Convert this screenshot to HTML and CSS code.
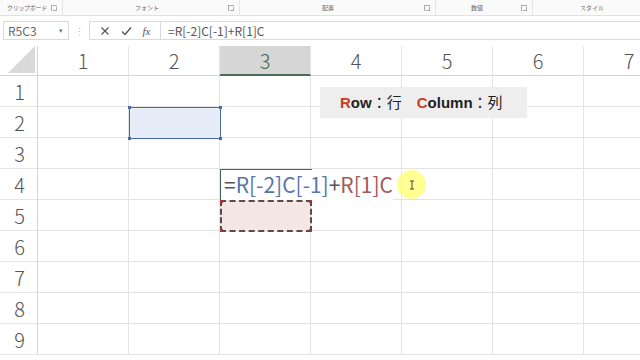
FILE: index.html
```html
<!DOCTYPE html>
<html lang="ja">
<head>
	<meta charset="UTF-8">
	<title>R1C1 参照形式</title>
	<link rel="stylesheet" href="styles.css">
</head>
<body>
	<div class="ribbon">
		<div class="group g-clip"><span>クリップボード</span><i class="launcher"></i></div>
		<div class="group g-font"><span>フォント</span><i class="launcher"></i></div>
		<div class="group g-align"><span>配置</span><i class="launcher"></i></div>
		<div class="group g-num"><span>数値</span><i class="launcher"></i></div>
		<div class="group g-style"><span>スタイル</span></div>
	</div>

	<div class="fbar">
		<div class="namebox">R5C3<span class="drop">▾</span></div>
		<div class="grip">⋮</div>
		<div class="fbtns">
			<svg width="10" height="10" viewBox="0 0 10 10"><path d="M1.5 1.5l7 7M8.5 1.5l-7 7" stroke="#555" stroke-width="1.2" fill="none"/></svg>
			<svg width="11" height="10" viewBox="0 0 11 10"><path d="M1 5.5l3 3 6-7" stroke="#555" stroke-width="1.4" fill="none"/></svg>
			<span class="fx">fx</span>
		</div>
		<div class="finput">=R[-2]C[-1]+R[1]C</div>
	</div>

	<div class="sheet">
		<div class="corner"><svg width="28" height="27" viewBox="0 0 28 27"><polygon points="27,0 27,27 0,27" fill="#d9d9d9"/></svg></div>
		<div class="ch">1</div><div class="ch">2</div><div class="ch sel">3</div><div class="ch">4</div><div class="ch">5</div><div class="ch">6</div><div class="ch">7</div>

		<div class="rh">1</div><div class="c"></div><div class="c"></div><div class="c"></div><div class="c"></div><div class="c"></div><div class="c"></div><div class="c"></div>
		<div class="rh">2</div><div class="c"></div><div class="c"></div><div class="c"></div><div class="c"></div><div class="c"></div><div class="c"></div><div class="c"></div>
		<div class="rh">3</div><div class="c"></div><div class="c"></div><div class="c"></div><div class="c"></div><div class="c"></div><div class="c"></div><div class="c"></div>
		<div class="rh">4</div><div class="c"></div><div class="c"></div><div class="c"></div><div class="c"></div><div class="c"></div><div class="c"></div><div class="c"></div>
		<div class="rh">5</div><div class="c"></div><div class="c"></div><div class="c"></div><div class="c"></div><div class="c"></div><div class="c"></div><div class="c"></div>
		<div class="rh">6</div><div class="c"></div><div class="c"></div><div class="c"></div><div class="c"></div><div class="c"></div><div class="c"></div><div class="c"></div>
		<div class="rh">7</div><div class="c"></div><div class="c"></div><div class="c"></div><div class="c"></div><div class="c"></div><div class="c"></div><div class="c"></div>
		<div class="rh">8</div><div class="c"></div><div class="c"></div><div class="c"></div><div class="c"></div><div class="c"></div><div class="c"></div><div class="c"></div>
		<div class="rh">9</div><div class="c"></div><div class="c"></div><div class="c"></div><div class="c"></div><div class="c"></div><div class="c"></div><div class="c"></div>

		<!-- 参照先のハイライト -->
		<div class="ref-blue"><i class="h tl"></i><i class="h tr"></i><i class="h bl"></i><i class="h br"></i></div>
		<div class="ref-red"><i class="h tl"></i><i class="h tr"></i><i class="h bl"></i><i class="h br"></i></div>

		<!-- 編集中のセル -->
		<div class="editor">=<span class="blue">R[-2]C[-1]</span>+<span class="red">R[1]C</span></div>
		<div class="cursor"><svg width="6" height="10" viewBox="0 0 6 10"><path d="M1 1h4M3 1v8M1 9h4" stroke="#444" stroke-width="1" fill="none"/></svg></div>

		<div class="note"><b><em>R</em>ow</b>：行　<b><em>C</em>olumn</b>：列</div>
	</div>
</body>
</html>
```

FILE: styles.css
```css
*{box-sizing:border-box;}
body{margin:0;width:640px;height:360px;overflow:hidden;background:#fff;font-family:"Noto Sans CJK JP","Noto Sans",sans-serif;color:#444;}

.ribbon{display:flex;height:16px;border-bottom:1px solid #e2e2e2;background:#fafafa;font-size:6px;line-height:15px;color:#666;white-space:nowrap;}
.ribbon .group{position:relative;display:flex;justify-content:center;border-right:1px solid #e4e4e4;}
.ribbon .g-clip{width:63px;justify-content:flex-start;padding-left:7px;letter-spacing:-0.3px;}
.ribbon .g-font{width:177px;padding-right:8px;}
.ribbon .g-align{width:196px;justify-content:flex-start;padding-left:82px;}
.ribbon .g-num{width:97px;padding-right:14px;}
.ribbon .g-style{flex:1;border-right:none;justify-content:flex-start;padding-left:47px;}
.launcher{position:absolute;right:5px;top:5px;width:6px;height:6px;border-left:1px solid #aaa;border-top:1px solid #aaa;}
.launcher:after{content:"";position:absolute;right:0;bottom:0;width:3px;height:3px;border-right:1px solid #aaa;border-bottom:1px solid #aaa;}

.fbar{display:flex;align-items:center;height:30px;padding:4px 0 5px 3px;font-size:12px;}
.namebox{position:relative;width:66px;height:19px;border:1px solid #dadada;padding-left:4px;line-height:17px;color:#666;}
.namebox .drop{position:absolute;right:5px;top:0;font-size:7px;color:#777;}
.grip{width:20px;text-align:center;color:#bbb;font-size:11px;}
.fbtns{display:flex;align-items:center;justify-content:space-around;width:71px;height:19px;border:1px solid #dadada;border-right:none;padding:0 4px;}
.fx{font-family:"Liberation Serif",serif;font-style:italic;font-size:11px;color:#555;}
.finput{flex:1;height:19px;border:1px solid #dadada;border-right:none;padding-left:7px;line-height:17px;color:#555;}

.sheet{position:relative;display:grid;grid-template-columns:38px repeat(7,91px);grid-template-rows:30px repeat(9,31px);width:640px;overflow:hidden;font-size:20px;font-weight:300;color:#555;}
.corner{display:flex;align-items:flex-end;justify-content:flex-end;padding:0 1px 2px 0;border-right:1px solid #d4d4d4;border-bottom:1px solid #d4d4d4;}
.ch{display:flex;align-items:center;justify-content:center;border-right:1px solid #e6e6e6;border-bottom:1px solid #d4d4d4;}
.ch.sel{background:#d6d6d6;color:#3b6650;border-bottom:2px solid #4a6b57;}
.rh{display:flex;align-items:center;justify-content:center;border-right:1px solid #d4d4d4;border-bottom:1px solid #e6e6e6;padding-left:2px;}
.c{border-right:1px solid #e3e3e3;border-bottom:1px solid #e3e3e3;}

.ref-blue,.ref-red{position:absolute;}
.ref-blue{left:129px;top:61px;width:92px;height:32px;background:#e7edf8;border:1px solid #4b6aa3;}
.ref-red{left:220px;top:154px;width:92px;height:32px;background:#f5e6e6;border:2px dashed #5e4a4a;}
.h{position:absolute;width:3px;height:3px;}
.ref-blue .h{background:#4b6aa3;}
.ref-red .h{background:#a03838;}
.h.tl{left:-2px;top:-2px;}
.h.tr{right:-2px;top:-2px;}
.h.bl{left:-2px;bottom:-2px;}
.h.br{right:-2px;bottom:-2px;}

.editor{position:absolute;left:220px;top:123px;height:31px;padding:0 0 0 3px;background:#fff;border-left:1px solid #3f6b52;font-size:21px;font-weight:400;line-height:30px;color:#555;white-space:nowrap;}
.editor:before{content:"";position:absolute;left:-1px;top:0;width:92px;height:1px;background:#3f6b52;}
.editor .blue{color:#5874a8;}
.editor .red{color:#a05a58;}
.cursor{position:absolute;left:397px;top:124px;width:29px;height:29px;border-radius:50%;background:rgba(255,255,110,.75);display:flex;align-items:center;justify-content:center;}

.note{position:absolute;left:320px;top:41px;width:207px;height:31px;padding-left:20px;background:#eeeeee;font-family:"Liberation Sans","Noto Sans CJK JP",sans-serif;font-size:15px;font-weight:400;line-height:31px;color:#222;white-space:nowrap;}
.note b{font-weight:700;}
.note em{font-style:normal;color:#d33a22;}
```
